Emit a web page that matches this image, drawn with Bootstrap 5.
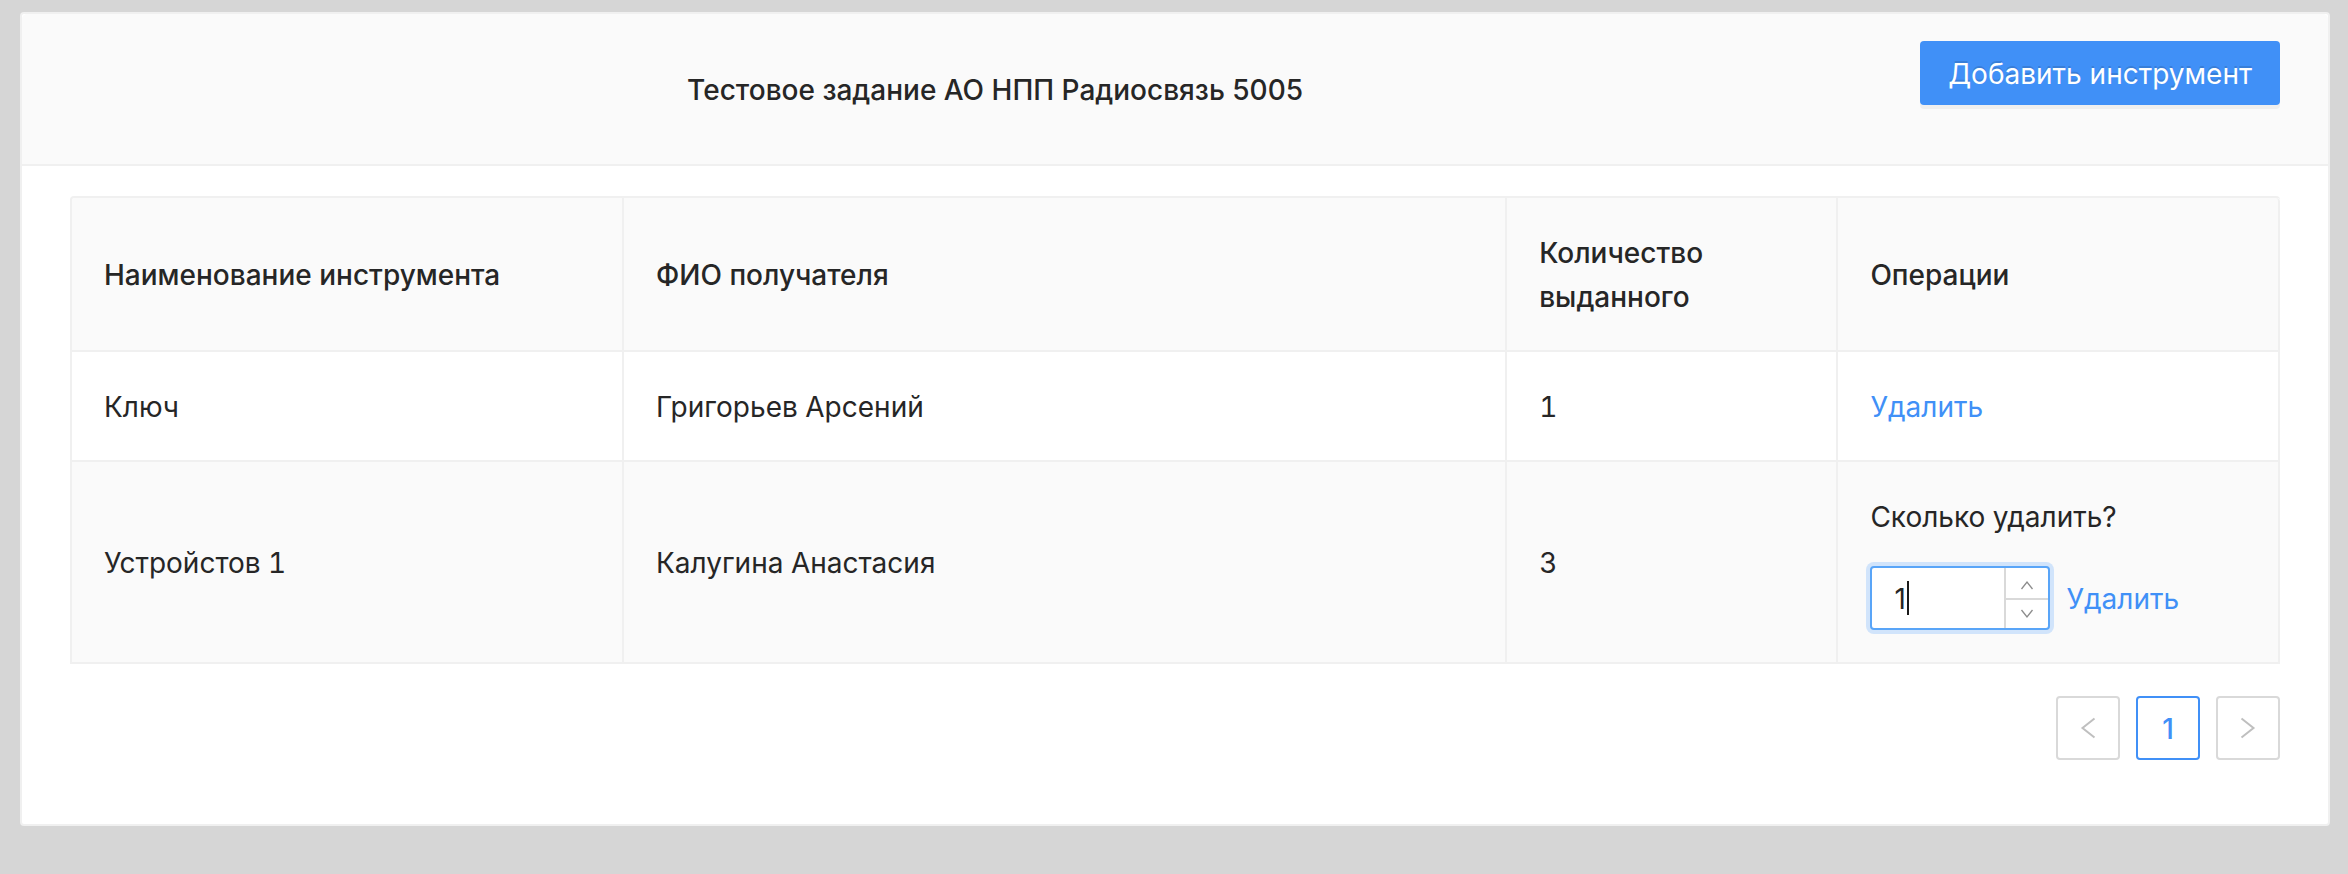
<!DOCTYPE html>
<html lang="ru">
<head>
<meta charset="utf-8">
<meta name="viewport" content="width=device-width, initial-scale=1">
<title>Учёт инструмента</title>
<link href="https://cdn.jsdelivr.net/npm/bootstrap@5.3.0/dist/css/bootstrap.min.css" rel="stylesheet">
<style>
  :root { --line: #f0f0f0; --soft: #fafafa; --ink: #262626; --brand: #4090f7; --control: #d9d9d9; }
  body { background: #d6d6d6; color: var(--ink); font-family: Inter, "Liberation Sans", sans-serif; font-size: 28px; line-height: 44px; padding: 12px 18px 48px 20px; }
  a { color: var(--brand); text-decoration: none; }
  .panel { border: 2px solid var(--line); border-radius: 4px; }
  .panel > .card-header { background: var(--soft); border-bottom: 2px solid var(--line); padding: 27px 48px; min-height: 152px; }
  .panel > .card-body { padding: 30px 48px 64px; }
  .panel-title { font-size: 28px; line-height: 44px; font-weight: 500; padding-top: 2px; }
  .btn-add { background: var(--brand); border: 0; border-radius: 4px; color: #fff; font-size: 28px; line-height: 44px; padding: 11px 28px 9px; box-shadow: 0 4px 0 rgba(0,0,0,.045); text-shadow: 0 -2px 0 rgba(0,0,0,.12); }
  .btn-add:hover { background: #69b1ff; color: #fff; }
  .tools { table-layout: fixed; border-collapse: separate; border-spacing: 0; border: 2px solid var(--line); border-width: 2px 0 0 2px; border-radius: 4px 4px 0 0; overflow: hidden; color: var(--ink); font-variant-numeric: tabular-nums; }
  .tools > :not(caption) > * > * { padding: 33px 32px 31px; border: 0 solid var(--line); border-width: 0 2px 2px 0; box-shadow: none; }
  .tools > thead { vertical-align: middle; }
  .tools th { font-weight: 500; background: var(--soft); }
  .tools th:last-child { border-top-right-radius: 4px; }
  .tools .current td { background: var(--soft); }
  .c-name { width: 25%; } .c-person { width: 40%; } .c-count { width: 15%; } .c-ops { width: 20%; }
  .remove-row { margin: 27px 0 1px; }
  .remove-row a { padding-top: 2px; }
  .stepper { width: 180px; height: 64px; background: #fff; border: 2px solid #59a5f8; border-radius: 4px; box-shadow: 0 0 0 4px rgba(24,130,255,.18); }
  .stepper input { min-width: 0; border: 0; outline: 0; background: transparent; color: var(--ink); padding: 2px 22px 0; caret-color: transparent; }
  .caret-bar { left: 35px; top: 13px; width: 2px; height: 34px; background: #1a1a1a; }
  .arrows { width: 44px; border-left: 2px solid var(--control); }
  .arrows button { height: 50%; border: 0; background: transparent; padding: 4px 0 0; color: #8c8c8c; }
  .arrows button + button { border-top: 2px solid var(--control); padding: 0; }
  .pager { gap: 16px; margin-top: 32px; }
  .pager .page-item .page-link { width: 64px; height: 64px; margin: 0; padding: 0; border: 2px solid var(--control); border-radius: 4px; color: #bfbfbf; background: #fff; font-size: 28px; font-weight: 500; }
  .pager .page-item.active .page-link { border-color: var(--brand); color: var(--brand); padding-top: 2px; }
  svg { display: block; fill: none; stroke: currentColor; }
</style>
</head>
<body>
<main class="card panel">
  <header class="card-header d-flex align-items-start">
    <h1 class="panel-title flex-grow-1 align-self-center text-center mb-0">Тестовое задание АО НПП Радиосвязь 5005</h1>
    <button type="button" class="btn btn-add">Добавить инструмент</button>
  </header>
  <div class="card-body">
    <table class="table tools align-middle mb-0">
      <colgroup><col class="c-name"><col class="c-person"><col class="c-count"><col class="c-ops"></colgroup>
      <thead>
        <tr><th scope="col">Наименование инструмента</th><th scope="col">ФИО получателя</th><th scope="col">Количество выданного</th><th scope="col">Операции</th></tr>
      </thead>
      <tbody>
        <tr><td>Ключ</td><td>Григорьев Арсений</td><td>1</td><td><a href="#">Удалить</a></td></tr>
        <tr class="current">
          <td>Устройстов 1</td><td>Калугина Анастасия</td><td>3</td>
          <td>
            <label class="d-block" for="amount">Сколько удалить?</label>
            <div class="remove-row d-flex align-items-center gap-3">
              <div class="stepper d-flex position-relative">
                <input id="amount" class="flex-grow-1" type="text" inputmode="numeric" value="1">
                <span class="caret-bar position-absolute"></span>
                <div class="arrows flex-shrink-0">
                  <button type="button" class="d-flex w-100 align-items-center justify-content-center" aria-label="Увеличить"><svg width="14" height="10" viewBox="0 0 14 10" stroke-width="1.3"><path d="M1.5 9 7 2l5.500 7"/></svg></button>
                  <button type="button" class="d-flex w-100 align-items-center justify-content-center" aria-label="Уменьшить"><svg width="14" height="10" viewBox="0 0 14 10" stroke-width="1.3"><path d="M1.500 1 7 8l5.500-7"/></svg></button>
                </div>
              </div>
              <a href="#">Удалить</a>
            </div>
          </td>
        </tr>
      </tbody>
    </table>
    <nav aria-label="Страницы">
      <ul class="pagination pager justify-content-end mb-0">
        <li class="page-item"><button type="button" class="page-link d-flex align-items-center justify-content-center" aria-label="Назад"><svg width="16" height="22" viewBox="0 0 16 22" stroke-width="2"><path d="M14.500 1.500 2.500 11l12 9.500"/></svg></button></li>
        <li class="page-item active"><a href="#" class="page-link d-flex align-items-center justify-content-center" aria-current="page">1</a></li>
        <li class="page-item"><button type="button" class="page-link d-flex align-items-center justify-content-center" aria-label="Вперёд"><svg width="16" height="22" viewBox="0 0 16 22" stroke-width="2"><path d="m1.500 1.500 12 9.500-12 9.500"/></svg></button></li>
      </ul>
    </nav>
  </div>
</main>
<script src="https://cdn.jsdelivr.net/npm/bootstrap@5.3.0/dist/js/bootstrap.bundle.min.js"></script>
</body>
</html>
